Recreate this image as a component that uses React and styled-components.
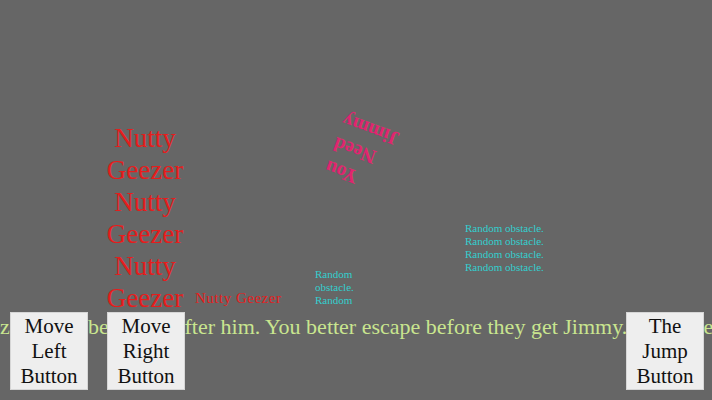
import React from 'react';
import styled, { createGlobalStyle } from 'styled-components';

const GlobalStyle = createGlobalStyle`
    html, body {
        margin: 0;
        padding: 0;
        background: #666666;
    }
    #root {
        width: 100vw;
        height: 100vh;
    }
`

const Stage = styled.div`
    position: relative;
    width: 100%;
    height: 100%;
    overflow: hidden;
    background: #666666;
    font-family: 'Liberation Serif', 'DejaVu Serif', serif;
`

// things on the game canvas sit at their own coordinates
const Sprite = styled.div`
    position: absolute;
    left: ${p => p.x}px;
    top: ${p => p.y}px;
`

const GeezerStack = styled(Sprite)`
    width: 90px;
    color: #e51d1d;
    font-size: 27px;
    line-height: 32px;
    text-align: center;
`

const SmallGeezer = styled(Sprite)`
    color: #e51d1d;
    font-size: 15px;
    letter-spacing: 0.5px;
    line-height: 18px;
    white-space: nowrap;
`

const Note = styled(Sprite)`
    color: #e0256f;
    font-size: 20px;
    font-weight: bold;
    line-height: 25px;
    text-align: right;
    transform: translate(-50%, -50%) rotate(200deg);
`

const Obstacle = styled(Sprite)`
    color: #33cfcf;
    font-size: 11px;
    line-height: 13px;
    width: ${p => p.w}px;
    height: ${p => p.h}px;
    overflow: hidden;
`

const Ticker = styled.div`
    position: absolute;
    left: 0;
    top: 314px;
    white-space: nowrap;
    color: #c9e58f;
    font-size: 22px;
    line-height: 26px;
    transform: translateX(${p => p.offset}px);
`

const Controls = styled.div`
    position: absolute;
    left: 0;
    right: 0;
    bottom: 0;
    display: flex;
    justify-content: space-between;
    align-items: flex-end;
    padding: 0 8px 10px 10px;
`

const Group = styled.div`
    display: flex;
    gap: 19px;
`

const PadButton = styled.button`
    width: 78px;
    height: 78px;
    padding: 0;
    border: 1px solid #d6d6d6;
    background: #eeeeee;
    color: #111111;
    font-family: 'Liberation Serif', 'DejaVu Serif', serif;
    font-size: 21px;
    line-height: 25px;
    text-align: center;
    display: flex;
    flex-direction: column;
    align-items: center;
    justify-content: center;
    cursor: pointer;
`

export default function App()
{
    return (
        <Stage>
            <GlobalStyle />
            <GeezerStack x={100} y={122}>
                Nutty Geezer Nutty Geezer Nutty Geezer
            </GeezerStack>
            <SmallGeezer x={195} y={289}>Nutty Geezer</SmallGeezer>
            <Note x={362} y={153}>You<br />Need<br />Jimmy</Note>
            <Obstacle x={465} y={222} w={100} h={52}>
                Random obstacle.<br />Random obstacle.<br />Random obstacle.<br />Random obstacle.
            </Obstacle>
            <Obstacle x={315} y={268} w={45} h={39}>
                Random obstacle. Random obstacle.
            </Obstacle>
            <Ticker offset={-91}>
                Nutty Geezers shall be racing after him. You better escape before they get Jimmy. Go, go, escape now!
            </Ticker>
            <Controls>
                <Group>
                    <PadButton><span>Move</span><span>Left</span><span>Button</span></PadButton>
                    <PadButton><span>Move</span><span>Right</span><span>Button</span></PadButton>
                </Group>
                <PadButton><span>The</span><span>Jump</span><span>Button</span></PadButton>
            </Controls>
        </Stage>
    )
}
